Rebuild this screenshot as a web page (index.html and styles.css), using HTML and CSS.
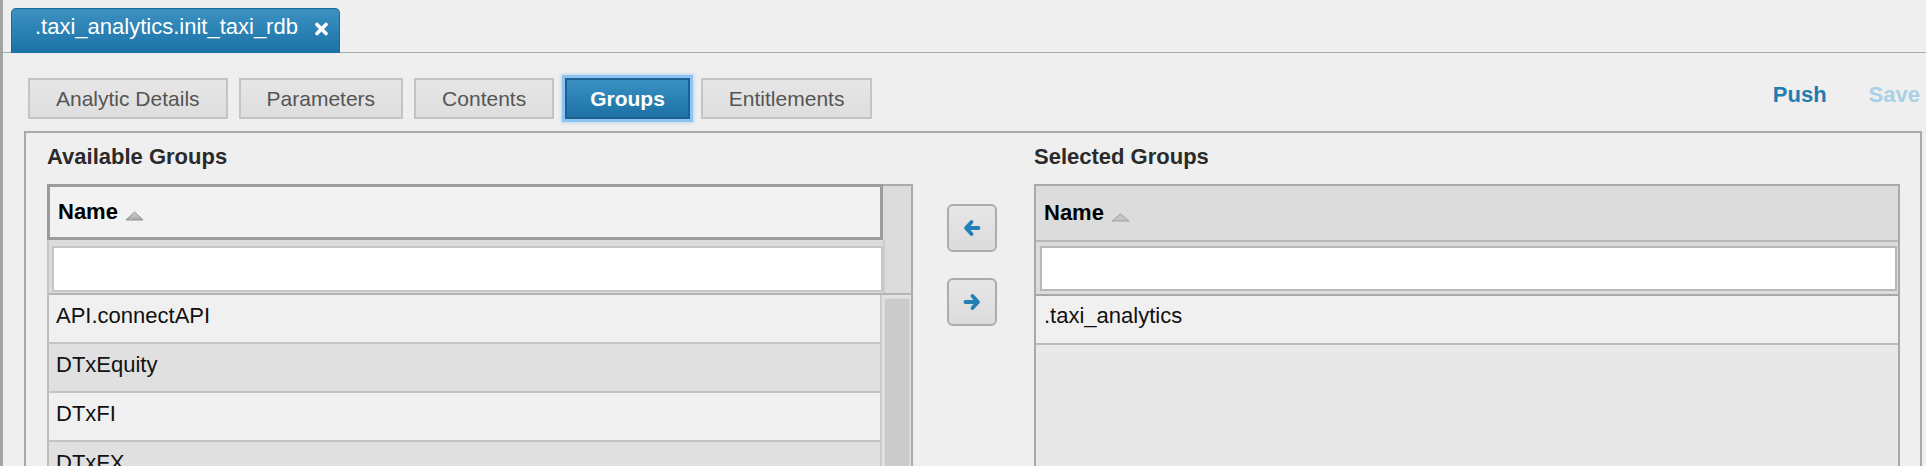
FILE: index.html
```html
<!DOCTYPE html>
<html lang="en">
<head>
  <meta charset="UTF-8">
  <title>.taxi_analytics.init_taxi_rdb</title>
  <link rel="stylesheet" href="styles.css">
</head>
<body>
  <div class="app">
    <div class="tabstrip">
      <div class="doc-tab">
        <span class="doc-tab-title">.taxi_analytics.init_taxi_rdb</span>
        <svg class="doc-tab-close" width="15" height="14" viewBox="0 0 15 14">
          <path d="M3 2.5 L12 11.5 M12 2.5 L3 11.5" stroke="#fff" stroke-width="3.6" stroke-linecap="round"/>
        </svg>
      </div>
    </div>

    <div class="toolbar">
      <button class="view-btn">Analytic Details</button>
      <button class="view-btn">Parameters</button>
      <button class="view-btn">Contents</button>
      <button class="view-btn active">Groups</button>
      <button class="view-btn">Entitlements</button>
      <div class="actions">
        <span class="action push">Push</span>
        <span class="action save">Save</span>
      </div>
    </div>

    <div class="panel">
      <div class="panel-grid">
        <!-- available -->
        <div class="picker">
          <h3 class="picker-title">Available Groups</h3>
          <div class="grid-available">
            <div class="grid-head">
              <div class="head-cell">Name <svg class="sort-icon" width="19" height="10" viewBox="0 0 19 10"><defs><linearGradient id="tri" x1="0" y1="0" x2="0" y2="1"><stop offset="0" stop-color="#d4d4d4"/><stop offset="1" stop-color="#a9a9a9"/></linearGradient></defs><polygon points="1,9 9.5,1 18,9" fill="url(#tri)" stroke="#8e8e8e" stroke-width="1"/></svg></div>
              <div class="head-gutter"></div>
            </div>
            <div class="grid-filter">
              <div class="filter-cell"><input type="text" class="filter-input"></div>
              <div class="filter-gutter"></div>
            </div>
            <div class="grid-body">
              <div class="rows">
                <div class="row">API.connectAPI</div>
                <div class="row">DTxEquity</div>
                <div class="row">DTxFI</div>
                <div class="row">DTxFX</div>
              </div>
              <div class="scroll-track"><div class="scroll-thumb"></div></div>
            </div>
          </div>
        </div>

        <!-- move buttons -->
        <div class="mover">
          <button class="move-btn" title="Remove">
            <svg width="20" height="20" viewBox="0 0 20 20"><path d="M9.5 4 L4 10 L9.5 16 M4.3 10 H16.5" fill="none" stroke="#2180b5" stroke-width="3.8" stroke-linecap="round" stroke-linejoin="round"/></svg>
          </button>
          <button class="move-btn" title="Add">
            <svg width="20" height="20" viewBox="0 0 20 20"><path d="M10.5 4 L16 10 L10.5 16 M15.7 10 H3.5" fill="none" stroke="#2180b5" stroke-width="3.8" stroke-linecap="round" stroke-linejoin="round"/></svg>
          </button>
        </div>

        <!-- selected -->
        <div class="picker">
          <h3 class="picker-title">Selected Groups</h3>
          <div class="grid-selected">
            <div class="sel-head">Name <svg class="sort-icon" width="19" height="9" viewBox="0 0 19 9"><polygon points="1,8 9.5,1 18,8" fill="#c4c4c4" stroke="#a0a0a0" stroke-width="1"/></svg></div>
            <div class="sel-filter"><input type="text" class="filter-input"></div>
            <div class="sel-row">.taxi_analytics</div>
          </div>
        </div>
      </div>
    </div>
  </div>
</body>
</html>
```

FILE: styles.css
```css
body {
  margin: 0;
  font-family: "Liberation Sans", Arial, sans-serif;
  background-color: #efefef;
  color: #111;
  overflow: hidden;
}

.app {
  border-left: 3px solid #a3a3a3;
  height: 100vh;
  box-sizing: border-box;
}

/* Document tab */
.tabstrip {
  display: flex;
  align-items: flex-end;
  height: 52px;
  padding-left: 8px;
  border-bottom: 1px solid #a9a9a9;
}

.doc-tab {
  display: flex;
  align-items: flex-start;
  gap: 16px;
  box-sizing: border-box;
  height: 45px;
  margin-bottom: -1px;
  padding: 5px 10px 0 23px;
  border: 1px solid #1a6898;
  border-bottom: none;
  border-radius: 5px 5px 0 0;
  background: linear-gradient(#3c91c2, #1c72a5);
  color: #fff;
}

.doc-tab-title {
  font-size: 22px;
  line-height: 25px;
}

.doc-tab-close {
  margin-top: 8px;
}

/* Toolbar */
.toolbar {
  display: flex;
  gap: 11px;
  padding: 25px 6px 0 25px;
}

.view-btn {
  height: 41px;
  padding: 0 26px;
  border: 2px solid #c4c4c4;
  background: linear-gradient(#e6e6e6, #dedede);
  color: #555;
  font-family: inherit;
  font-size: 21px;
  line-height: 37px;
  cursor: pointer;
}

.view-btn.active {
  padding: 0 23px;
  border-color: #1d5f8e;
  background: linear-gradient(#3990c1, #1c72a6);
  color: #fff;
  font-weight: bold;
  box-shadow: 0 0 0 3px #8cc3f1, 0 0 3px 4px rgba(140, 195, 241, 0.5);
}

.actions {
  display: flex;
  gap: 42px;
  margin-left: auto;
  padding-top: 4px;
  align-self: flex-start;
}

.action {
  font-size: 22px;
  font-weight: bold;
  line-height: 25px;
  cursor: pointer;
}

.action.push {
  color: #1f7db3;
}

.action.save {
  color: #a8d0e7;
}

/* Panel */
.panel {
  height: 380px;
  margin: 12px 4px 0 21px;
  border: 2px solid #a8a8a8;
}

.panel-grid {
  display: grid;
  grid-template-columns: 866px 121px 866px;
  padding: 11px 20px 0 21px;
}

.picker-title {
  margin: 0 0 15px;
  font-size: 22px;
  line-height: 25px;
  color: #2a2a2a;
}

/* Available grid */
.grid-head {
  display: flex;
  height: 56px;
}

.head-cell {
  flex: 1;
  box-sizing: border-box;
  padding-left: 8px;
  border: 3px solid #9c9c9c;
  background-color: #f2f2f2;
  color: #000;
  font-size: 22px;
  font-weight: bold;
  line-height: 50px;
}

.sort-icon {
  margin-left: 1px;
  vertical-align: -2px;
}

.head-gutter {
  width: 30px;
  box-sizing: border-box;
  border-top: 2px solid #aaa;
  border-right: 2px solid #aaa;
  background-color: #dcdcdc;
}

.grid-filter {
  display: flex;
  height: 55px;
  box-sizing: border-box;
  border-left: 2px solid #c6c6c6;
  border-bottom: 2px solid #b4b4b4;
  background-color: #dcdcdc;
}

.filter-cell {
  flex: 1;
  padding: 6px 0 0 3px;
}

.filter-input {
  display: block;
  width: 100%;
  height: 46px;
  box-sizing: border-box;
  margin: 0;
  border: 2px solid #c6c6c6;
  background-color: #fff;
  outline: none;
}

.filter-gutter {
  width: 30px;
  box-sizing: border-box;
  border-left: 2px solid #cdcdcd;
  border-right: 2px solid #aaa;
}

.grid-body {
  display: flex;
  height: 200px;
  overflow: hidden;
}

.rows {
  flex: 1;
}

.row {
  height: 49px;
  box-sizing: border-box;
  padding-left: 7px;
  border-left: 2px solid #bcbcbc;
  border-right: 2px solid #cacaca;
  border-bottom: 2px solid #c4c4c4;
  background-color: #f0f0f0;
  font-size: 22px;
  line-height: 41px;
}

.row:nth-child(even) {
  background-color: #e0e0e0;
}

.scroll-track {
  width: 31px;
  box-sizing: border-box;
  padding: 3px 1px 0 2px;
  border-right: 2px solid #aaa;
  background-color: #e2e2e2;
}

.scroll-thumb {
  height: 100%;
  border: 1px solid #d9d9d9;
  background-color: #cbcbcb;
}

/* Move buttons */
.mover {
  display: flex;
  flex-direction: column;
  align-items: flex-start;
  gap: 26px;
  padding: 60px 0 0 34px;
}

.move-btn {
  display: flex;
  align-items: center;
  justify-content: center;
  width: 50px;
  height: 48px;
  padding: 0;
  border: 2px solid #acacac;
  border-radius: 6px;
  background: linear-gradient(#e7e7e7, #dbdbdb);
  cursor: pointer;
}

/* Selected grid */
.grid-selected {
  height: 300px;
  border: 2px solid #a9a9a9;
  border-bottom: none;
  background-color: #e8e8e8;
}

.sel-head {
  height: 56px;
  box-sizing: border-box;
  padding-left: 8px;
  border-bottom: 2px solid #b8b8b8;
  background-color: #dcdcdc;
  color: #000;
  font-size: 22px;
  font-weight: bold;
  line-height: 54px;
}

.sel-filter {
  height: 54px;
  box-sizing: border-box;
  padding: 4px 1px 0 4px;
  border-bottom: 2px solid #a8a8a8;
  background-color: #dcdcdc;
}

.sel-filter .filter-input {
  height: 45px;
  border-color: #b8b8b8;
}

.sel-row {
  height: 49px;
  box-sizing: border-box;
  padding-left: 8px;
  border-bottom: 2px solid #bcbcbc;
  background-color: #f0f0f0;
  font-size: 22px;
  line-height: 40px;
}
```
